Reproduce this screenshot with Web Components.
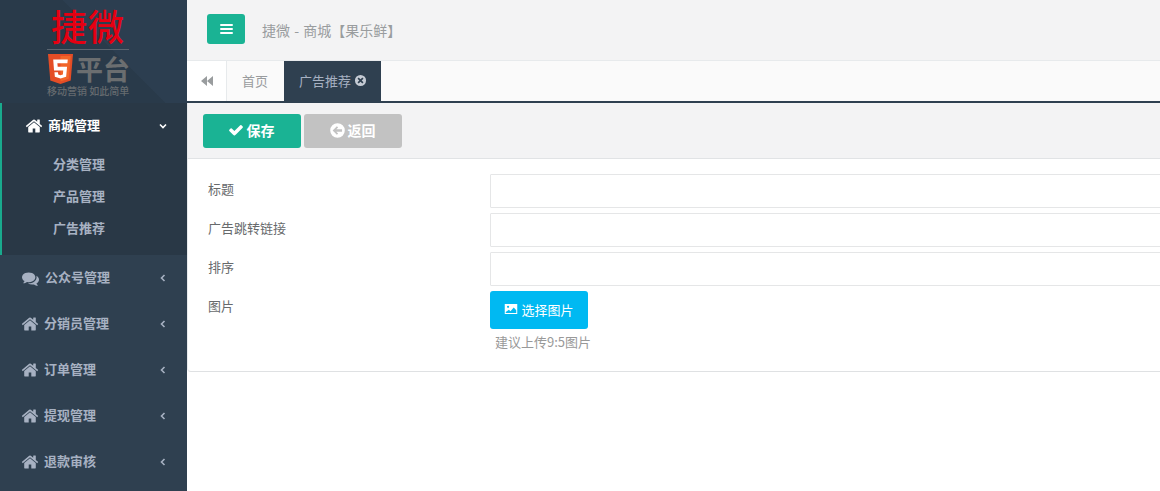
<!DOCTYPE html>
<html lang="zh">
<head>
<meta charset="utf-8">
<title>广告推荐</title>
<style>
    html, body {
        margin: 0;
        height: 100%;
        overflow: hidden;
        font-family: "Open Sans", "Noto Sans CJK SC", sans-serif;
        font-size: 13px;
        color: #676a6c;
    }
    admin-page { height: 100%; }
</style>
</head>
<body>
<admin-page>
    <side-nav slot="side">
        <nav-group icon="home" label="商城管理" open>
            <sub-link>分类管理</sub-link>
            <sub-link>产品管理</sub-link>
            <sub-link>广告推荐</sub-link>
        </nav-group>
        <nav-group icon="comments" label="公众号管理"></nav-group>
        <nav-group icon="home" label="分销员管理"></nav-group>
        <nav-group icon="home" label="订单管理"></nav-group>
        <nav-group icon="home" label="提现管理"></nav-group>
        <nav-group icon="home" label="退款审核"></nav-group>
    </side-nav>
    <top-bar>捷微 - 商城【果乐鲜】</top-bar>
    <tab-strip></tab-strip>
    <form-panel>
        <form-row label="标题"><input-box></input-box></form-row>
        <form-row label="广告跳转链接"><input-box></input-box></form-row>
        <form-row label="排序"><input-box></input-box></form-row>
        <form-row label="图片">
            <action-button color="#00b9f2" icon="picture" weight="400" size="14" font="13" gap="3" width="98" height="38">选择图片</action-button>
            <span style="display:block;margin:4px 0 0 5px;color:#999;font-size:13px;line-height:18px">建议上传9:5图片</span>
        </form-row>
    </form-panel>
</admin-page>

<script>
const ICONS = {
    home: 'M1472 992v480q0 26-19 45t-45 19h-384v-384h-256v384h-384q-26 0-45-19t-19-45v-480q0-1 .5-3t.5-3l575-474 575 474q1 2 1 6zm223-69l-62 74q-8 9-21 11h-3q-13 0-21-7l-692-577-692 577q-12 8-24 7-13-2-21-11l-62-74q-8-10-7-23.500t11-21.500l719-599q32-26 76-26t76 26l244 204v-195q0-14 9-23t23-9h192q14 0 23 9t9 23v408l219 182q10 8 11 21.500t-7 23.500z',
    comments: 'M1408 768q0 139-94 257t-256.500 186.500-353.500 68.500q-86 0-176-16-124 88-278 128-36 9-86 16h-3q-11 0-20.500-8t-11.500-21q-1-3-1-6.500t.5-6.500 2-6l2.500-5 3.500-5.500 4-5 4.500-5 4-4.500q5-6 23-25t26-29.500 22.500-29 25-38.500 20.500-44q-124-72-195-177t-71-224q0-139 94-257t256.500-186.500 353.500-68.500 353.500 68.500 256.500 186.500 94 257zm384 256q0 120-71 224.500t-195 176.500q10 24 20.500 44t25 38.500 22.500 29 26 29.500 23 25q1 1 4 4.500t4.500 5 4 5 3.500 5.500l2.500 5 2 6 .5 6.500-1 6.500q-3 14-13 22t-22 7q-50-7-86-16-154-40-278-128-90 16-176 16-271 0-472-132 58 4 88 4 161 0 309-45t264-129q125-92 192-212t67-254q0-77-23-152 129 71 204 178t75 230z',
    check: 'M1671 566q0 40-28 68l-724 724-136 136q-28 28-68 28t-68-28l-136-136-362-362q-28-28-28-68t28-68l136-136q28-28 68-28t68 28l294 295 656-657q28-28 68-28t68 28l136 136q28 28 28 68z',
    back: 'M896 128a768 768 0 1 0 0 1536a768 768 0 1 0 0-1536zM832 448l128 128l-192 192h608v256h-608l192 192l-128 128l-448-448z',
    close: 'M896 128a768 768 0 1 0 0 1536a768 768 0 1 0 0-1536zM640 480l256 256l256-256l160 160l-256 256l256 256l-160 160l-256-256l-256 256l-160-160l256-256l-256-256z',
    picture: 'M96 256h1600v1280h-1600zM224 384v1024h1344v-350l-320-350l-420 460l-200-190l-404 300zM520 480a140 140 0 1 0 0 280a140 140 0 1 0 0-280z'
};

class SvgIcon extends HTMLElement {
    constructor() {
        super();
        const size = this.getAttribute('size') || 14;
        this.attachShadow({ mode: 'open' }).innerHTML = `
<style>
    :host { display: inline-flex; flex: none; }
    svg { width: ${size}px; height: ${size}px; fill: currentColor; fill-rule: evenodd; display: block; }
</style>
<svg viewBox="0 0 1792 1792"><path d="${ICONS[this.getAttribute('name')]}"/></svg>`;
    }
}
customElements.define('svg-icon', SvgIcon);

const pageTpl = document.createElement('template');
pageTpl.innerHTML = `
<style>
    :host { display: grid; grid-template-columns: 187px 1fr; grid-template-rows: 61px 42px 1fr; height: 100%; background: #fff; }
    .side { grid-row: 1 / 4; }
</style>
<div class="side"><slot name="side"></slot></div>
<slot></slot>`;
class AdminPage extends HTMLElement {
    constructor() {
        super();
        this.attachShadow({ mode: 'open' }).appendChild(pageTpl.content.cloneNode(true));
    }
}
customElements.define('admin-page', AdminPage);

const sideTpl = document.createElement('template');
sideTpl.innerHTML = `
<style>
    :host { display: block; height: 100%; background: #2f4050; overflow: hidden; }
    .logo {
        height: 103px;
        box-sizing: border-box;
        padding: 5px 0 0 47px;
        background: linear-gradient(45deg, #293a4a 0, #293a4a 57%, #2c3e50 57.3%, #2c3e50 100%);
        font-family: "Noto Sans CJK SC", sans-serif;
    }
    .name {
        width: 82px;
        text-align: center;
        color: #e60012;
        font-size: 36px;
        line-height: 41px;
        font-weight: 500;
        letter-spacing: 1px;
        border-bottom: 1px solid #5b6570;
        padding-bottom: 3px;
    }
    .row { display: flex; align-items: center; gap: 3px; margin: 4px 0 0 1px; height: 30px; }
    .row svg { width: 25px; height: 30px; display: block; }
    .ping { color: #6b6e70; font-size: 27px; line-height: 30px; font-weight: 700; }
    .tag { color: #666b6f; font-size: 10px; line-height: 13px; font-weight: 500; white-space: nowrap; }
</style>
<div class="logo">
    <div class="name">捷微</div>
    <div class="row">
        <svg viewBox="0 0 24 30" preserveAspectRatio="none">
            <path fill="#e44d26" d="M0 0h24l-2.200 26.500L12 30l-9.800-3.500z"/>
            <path fill="#f16529" d="M12 2v25.500l7.900-2.800L21.800 2z"/>
            <path fill="#fff" d="M5 5.500h14l-.4 3.700H9l.3 3.500h9l-.9 10L12 24.500l-5.400-1.800-.4-4.400h3.400l.2 2.200 2.200.7 2.300-.7.3-3.900H5.800z"/>
        </svg>
        <span class="ping">平台</span>
    </div>
    <div class="tag">移动营销 如此简单</div>
</div>
<slot></slot>`;
class SideNav extends HTMLElement {
    constructor() {
        super();
        this.attachShadow({ mode: 'open' }).appendChild(sideTpl.content.cloneNode(true));
    }
}
customElements.define('side-nav', SideNav);

class NavGroup extends HTMLElement {
    constructor() {
        super();
        const open = this.hasAttribute('open');
        const icon = this.getAttribute('icon');
        const chat = icon === 'comments';
        this.attachShadow({ mode: 'open' }).innerHTML = `
<style>
    :host { display: block; font-family: "Noto Sans CJK SC", sans-serif; font-weight: 700; font-size: 13px; color: #a7b1c2; }
    :host([open]) { background: #293846; border-left: 2px solid #19aa8d; height: 152px; box-sizing: border-box; color: #fff; }
    .head { display: flex; align-items: center; height: 46px; padding-left: ${chat ? 22 : 21}px; }
    :host([open]) .head { padding-left: 23px; }
    :host([open]) .subs { margin-top: -1px; }
    .text { margin-left: ${chat ? 6 : 5}px; padding-bottom: 3px; flex: 1; white-space: nowrap; }
    .arrow { width: 8px; height: 8px; margin-right: 20px; display: block; fill: none; stroke: currentColor; stroke-width: 1.600; }
</style>
<div class="head">
    <svg-icon name="${icon}" size="${chat ? 17 : 18}"></svg-icon>
    <span class="text">${this.getAttribute('label')}</span>
    <svg class="arrow" viewBox="0 0 8 8"><path d="${open ? 'M1 2.500 4 5.500 7 2.500' : 'M5.500 1 2.500 4 5.500 7'}"/></svg>
</div>
<div class="subs"><slot></slot></div>`;
    }
}
customElements.define('nav-group', NavGroup);

class SubLink extends HTMLElement {
    constructor() {
        super();
        this.attachShadow({ mode: 'open' }).innerHTML = `
<style>
    :host { display: block; height: 32px; line-height: 32px; padding-left: 51px; color: #a7b1c2; font-size: 13px; font-weight: 700; }
</style>
<slot></slot>`;
    }
}
customElements.define('sub-link', SubLink);

class TopBar extends HTMLElement {
    constructor() {
        super();
        this.attachShadow({ mode: 'open' }).innerHTML = `
<style>
    :host { display: flex; align-items: center; box-sizing: border-box; height: 61px; background: #f3f3f4; border-bottom: 1px solid #e7eaec; padding: 0 0 0 20px; }
    .toggle { width: 38px; height: 30px; margin-top: -2px; background: #1ab394; border-radius: 3px; display: flex; flex-direction: column; justify-content: center; align-items: center; gap: 2px; }
    .toggle i { display: block; width: 13px; height: 2px; background: #fff; border-radius: 1px; }
    .title { margin-left: 17px; font-family: "Noto Sans CJK SC", sans-serif; color: #999c9e; font-size: 14px; word-spacing: 1px; }
</style>
<div class="toggle"><i></i><i></i><i></i></div>
<span class="title"><slot></slot></span>`;
    }
}
customElements.define('top-bar', TopBar);

class TabStrip extends HTMLElement {
    constructor() {
        super();
        this.attachShadow({ mode: 'open' }).innerHTML = `
<style>
    :host { display: flex; box-sizing: border-box; height: 42px; background: #fafafa; border-bottom: 2px solid #2f4050; font-family: "Noto Sans CJK SC", sans-serif; font-size: 13px; color: #999c9e; }
    .back { width: 39px; background: #fff; border-right: 1px solid #e7eaec; display: flex; align-items: center; justify-content: center; color: #999c9e; }
    .back svg { width: 12px; height: 10px; fill: currentColor; display: block; }
    .tab { display: flex; align-items: center; height: 40px; box-sizing: border-box; padding: 0 15px 2px; }
    .home { width: 57px; }
    .cur { background: #2f4050; color: #a7b1c2; width: 97px; white-space: nowrap; }
    .cur svg-icon { margin-left: 3px; color: #c5cbd4; }
</style>
<div class="back"><svg viewBox="0 0 12 10"><path d="M6 0v10L0 5zM12 0v10L6 5z"/></svg></div>
<div class="tab home">首页</div>
<div class="tab cur">广告推荐<svg-icon name="close" size="13"></svg-icon></div>`;
    }
}
customElements.define('tab-strip', TabStrip);

class ActionButton extends HTMLElement {
    constructor() {
        super();
        const w = this.getAttribute('width') || 98;
        const h = this.getAttribute('height') || 34;
        this.attachShadow({ mode: 'open' }).innerHTML = `
<style>
    :host { display: inline-flex; align-items: center; justify-content: center; box-sizing: border-box; width: ${w}px; height: ${h}px; padding: 0 ${this.getAttribute('pad') || 0}px 2px 0; border-radius: 3px; background: ${this.getAttribute('color')}; color: #fff; font-family: "Noto Sans CJK SC", sans-serif; font-size: ${this.getAttribute('font') || 14}px; font-weight: ${this.getAttribute('weight') || 700}; white-space: nowrap; gap: ${this.getAttribute('gap') || 3}px; }
</style>
<svg-icon name="${this.getAttribute('icon')}" size="${this.getAttribute('size') || 16}"></svg-icon><slot></slot>`;
    }
}
customElements.define('action-button', ActionButton);

class FormPanel extends HTMLElement {
    constructor() {
        super();
        this.attachShadow({ mode: 'open' }).innerHTML = `
<style>
    :host { display: block; }
    .tools { display: flex; gap: 3px; box-sizing: border-box; height: 56px; padding: 11px 0 0 15px; background: #f3f3f4; border: 1px solid #e7eaec; border-right: 0; border-top: 0; border-bottom-color: #e1e3e5; }
    .body { box-sizing: border-box; height: 213px; padding: 15px 0 0 0; border-left: 1px solid #e7eaec; border-bottom: 1px solid #dfe1e3; border-bottom-left-radius: 4px; background: #fff; display: flex; flex-direction: column; gap: 5px; overflow: hidden; }
</style>
<div class="tools">
    <action-button color="#1ab394" icon="check" pad="2">保存</action-button>
    <action-button color="#c2c2c2" icon="back" size="17" gap="2" pad="2">返回</action-button>
</div>
<div class="body"><slot></slot></div>`;
    }
}
customElements.define('form-panel', FormPanel);

class FormRow extends HTMLElement {
    constructor() {
        super();
        this.attachShadow({ mode: 'open' }).innerHTML = `
<style>
    :host { display: grid; grid-template-columns: 302px 1fr; font-family: "Noto Sans CJK SC", sans-serif; }
    .label { padding: 5px 0 0 20px; font-size: 13px; line-height: 19px; color: #676a6c; }
</style>
<div class="label">${this.getAttribute('label')}</div>
<div><slot></slot></div>`;
    }
}
customElements.define('form-row', FormRow);

class InputBox extends HTMLElement {
    constructor() {
        super();
        this.attachShadow({ mode: 'open' }).innerHTML = `
<style>
    :host { display: block; }
    input { display: block; box-sizing: border-box; width: 100%; min-width: 700px; height: 34px; border: 1px solid #e5e6e7; border-radius: 1px; background: #fff; padding: 6px 12px; outline: none; }
</style>
<input type="text">`;
    }
}
customElements.define('input-box', InputBox);
</script>
</body>
</html>
